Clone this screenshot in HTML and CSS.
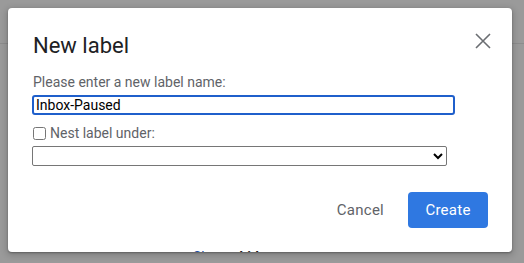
FILE: index.html
```html
<!DOCTYPE html>
<html>
<head>
<meta charset="utf-8">
<link rel="stylesheet" href="styles.css">
</head>
<body>
<div class="page">
  <div class="page-header"></div>
</div>
<div class="dialog" role="dialog">
  <div class="dialog-head">
    <h1 class="title">New label</h1>
    <button class="close" aria-label="Close">
      <svg width="16" height="16" viewBox="0 0 16 16"><path d="M1 1 L15 15 M15 1 L1 15" stroke="#6b6e72" stroke-width="1.6" fill="none"/></svg>
    </button>
  </div>
  <label class="field-label" for="name">Please enter a new label name:</label>
  <input id="name" class="name-input" type="text" value="Inbox-Paused">
  <label class="nest-row"><input type="checkbox" class="nest-check"><span>Nest label under:</span></label>
  <select class="parent-select"><option></option></select>
  <div class="actions">
    <button class="btn-cancel">Cancel</button>
    <button class="btn-create">Create</button>
  </div>
  <div class="behind"><span class="show">Show</span><span class="hide">hide</span></div>
</div>
</body>
</html>
```
FILE: styles.css
```css
html, body { margin: 0; padding: 0; }
body {
  width: 524px; height: 263px; overflow: hidden;
  background: #9a9a9a;
  font-family: Roboto, "Liberation Sans", sans-serif;
  position: relative;
}
.page { height: 263px; }
.page-header { height: 43px; border-bottom: 1px solid #8c8c8c; }
.dialog {
  position: absolute; left: 8px; top: 8px;
  width: 504px; height: 244px; box-sizing: border-box;
  background: #fff; border-radius: 4px;
  padding: 24px 24px 0 24px;
  box-shadow: 0 2px 6px 2px rgba(0,0,0,.15), 0 1px 2px rgba(0,0,0,.3);
  overflow: hidden;
  display: flex; flex-direction: column;
}
.dialog-head { display: flex; justify-content: space-between; align-items: flex-start; height: 40px; }
.title {
  margin: 0; font-weight: 400; font-size: 22px; line-height: 28px;
  color: #202124; margin-left: 1px; letter-spacing: 0;
}
.close {
  border: 0; background: none; padding: 0; margin: 1px -3px 0 0; width: 16px; height: 16px;
}
.close svg { display: block; }
.field-label { font-size: 14px; line-height: 18px; color: #5f6368; margin-left: 1px; margin-top: 1px; }
.name-input {
  margin-top: 4px; width: 423px; height: 20px; box-sizing: border-box;
  border: 2px solid #1f5fcb; border-radius: 3px; outline: none;
  font: 14px Roboto, "Liberation Sans", sans-serif; color: #000; padding: 0 2px;
}
.nest-row { display: flex; align-items: center; gap: 4px; margin-top: 10px; font-size: 14px; line-height: 16px; color: #5f6368; }
.nest-check { margin: 0 0 0 1px; width: 13px; height: 13px; }
.parent-select {
  margin-top: 5px; width: 415px; height: 20px; box-sizing: border-box;
  border: 1px solid #767676; border-radius: 2px; background: #fff;
}
.actions { display: flex; justify-content: flex-end; align-items: center; gap: 8px; margin-top: 26px; }
.btn-cancel, .btn-create {
  font: 400 15px Roboto, "Liberation Sans", sans-serif; letter-spacing: .25px;
  height: 36px; border-radius: 4px; border: 0; cursor: pointer;
}
.btn-cancel { background: none; color: #5f6368; padding: 0 16px; }
.btn-create { background: #2f78e1; color: #fff; width: 80px; }
.behind {
  position: absolute; left: 185px; top: 241px; font-size: 14px; line-height: 16px;
  display: flex; gap: 12px;
}
.show { color: #1a4ea8; }
.hide { color: #222; font-weight: 700; }
```
